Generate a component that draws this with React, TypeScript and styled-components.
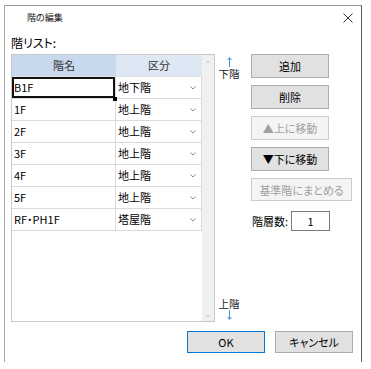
import React from "react";
import styled, { createGlobalStyle, css } from "styled-components";

const Global = createGlobalStyle`
  html, body { margin: 0; padding: 0; background: #fff; }
  body {
    font-family: "Noto Sans CJK JP", "Noto Sans", sans-serif;
    font-feature-settings: "palt";
    color: #000;
  }
`;

const Window = styled.div`
  margin: 5px 0 0 4px;
  width: 358px;
  height: 357px;
  box-sizing: border-box;
  border-top: 1px solid #9c9c9c;
  border-left: 1px solid #ababab;
  border-right: 1px solid #5c5c5c;
  background: #fff;
  display: flex;
  flex-direction: column;
`;

const TitleBar = styled.div`
  height: 24px;
  display: flex;
  align-items: center;
  justify-content: space-between;
  padding: 0 8px 0 22px;
`;

const Title = styled.span`
  font-size: 9px;
  line-height: 24px;
  color: #111;
`;

const Main = styled.div`
  display: flex;
  align-items: flex-start;
  padding-left: 6px;
`;

const LeftCol = styled.div`
  width: 204px;
  display: flex;
  flex-direction: column;
`;

const ListLabel = styled.div`
  height: 24px;
  box-sizing: border-box;
  padding-top: 6px;
  font-size: 12px;
  line-height: 14px;
`;

const Table = styled.div`
  width: 204px;
  height: 268px;
  box-sizing: border-box;
  border: 1px solid #c9c9c9;
  display: flex;
`;

const GridArea = styled.div`
  flex: 1;
  display: flex;
  flex-direction: column;
  background: #fff;
`;

const HeaderRow = styled.div`
  display: flex;
  height: 22px;
  box-sizing: border-box;
  border-bottom: 1px solid #e2e2e2;
`;

const HeaderCell = styled.div<{ $w: number; $bg: string }>`
  width: ${(p) => p.$w}px;
  background: ${(p) => p.$bg};
  text-align: center;
  font-size: 11px;
  line-height: 21px;
  color: #333;
`;

const Row = styled.div`
  display: flex;
  height: 22px;
  box-sizing: border-box;
  border-bottom: 1px solid #dadada;
`;

const NameCell = styled.div<{ $selected?: boolean }>`
  position: relative;
  width: 104px;
  box-sizing: border-box;
  border-right: 1px solid #dadada;
  padding-left: 2px;
  font-size: 11px;
  line-height: 21px;
  ${(p) =>
    p.$selected &&
    css`
      box-shadow: inset 0 0 0 2px #111;
    `}
`;

const Handle = styled.span`
  position: absolute;
  right: -2px;
  bottom: -3px;
  width: 4px;
  height: 4px;
  background: #000;
  z-index: 2;
`;

const KindCell = styled.div`
  width: 86px;
  box-sizing: border-box;
  border-right: 1px solid #dadada;
  padding: 0 5px 0 2px;
  display: flex;
  align-items: center;
  justify-content: space-between;
  font-size: 11px;
  line-height: 21px;
`;

const Scrollbar = styled.div`
  width: 12px;
  background: #f0f0f0;
  display: flex;
  flex-direction: column;
  align-items: center;
  justify-content: space-between;
  padding: 5px 0 3px;
  box-sizing: border-box;
`;

const ArrowCol = styled.div`
  width: 36px;
  height: 268px;
  margin-top: 24px;
  box-sizing: border-box;
  padding: 3px 0 2px 3px;
  display: flex;
  flex-direction: column;
  justify-content: space-between;
  align-items: flex-start;
`;

const ArrowGroup = styled.div`
  width: 22px;
  display: flex;
  flex-direction: column;
  align-items: center;
`;

const ArrowText = styled.span`
  font-size: 10.5px;
  line-height: 13px;
  color: #222;
`;

const ButtonCol = styled.div`
  margin-top: 24px;
  display: flex;
  flex-direction: column;
  gap: 7px;
`;

const Btn = styled.button<{ $w?: number; $h?: number; $primary?: boolean }>`
  width: ${(p) => p.$w ?? 78}px;
  height: ${(p) => p.$h ?? 24}px;
  box-sizing: border-box;
  padding: 0;
  margin: 0;
  border: 1px solid ${(p) => (p.$primary ? "#0078d7" : "#adadad")};
  background: #e1e1e1;
  font-family: inherit;
  font-feature-settings: "palt";
  font-size: 11px;
  line-height: 14px;
  color: #000;
  &:disabled {
    background: #f4f4f4;
    border-color: #cccccc;
    color: #a0a0a0;
  }
`;

const CountRow = styled.div`
  margin-top: 3px;
  display: flex;
  align-items: center;
`;

const CountLabel = styled.span`
  width: 40px;
  padding-left: 1px;
  box-sizing: border-box;
  font-size: 11px;
`;

const CountInput = styled.div`
  width: 39px;
  height: 20px;
  box-sizing: border-box;
  border: 1px solid #7a7a7a;
  font-size: 11px;
  line-height: 18px;
  text-align: center;
`;

const Footer = styled.div`
  margin-top: 9px;
  display: flex;
  justify-content: flex-end;
  gap: 10px;
  padding-right: 8px;
`;

const Chevron = ({ up, color = "#8a8a8a" }: { up?: boolean; color?: string }) => (
  <svg width="6" height="4" viewBox="0 0 6 4">
    <polyline
      points={up ? "0.5,3.5 3,1 5.5,3.5" : "0.5,0.5 3,3 5.5,0.5"}
      fill="none"
      stroke={color}
      strokeWidth="1"
    />
  </svg>
);

const Arrow = ({ down }: { down?: boolean }) => (
  <svg width="5" height="10" viewBox="0 0 5 10">
    {down ? (
      <>
        <line x1="2.5" y1="0" x2="2.5" y2="9" stroke="#4a8fd6" strokeWidth="1" />
        <polyline points="0.5,7 2.5,9.5 4.5,7" fill="none" stroke="#4a8fd6" strokeWidth="1" />
      </>
    ) : (
      <>
        <line x1="2.5" y1="1" x2="2.5" y2="10" stroke="#4a8fd6" strokeWidth="1" />
        <polyline points="0.5,3 2.5,0.5 4.5,3" fill="none" stroke="#4a8fd6" strokeWidth="1" />
      </>
    )}
  </svg>
);

const CloseIcon = () => (
  <svg width="10" height="10" viewBox="0 0 10 10">
    <path d="M0.5 0.5 L9.5 9.5 M9.5 0.5 L0.5 9.5" stroke="#333" strokeWidth="1" />
  </svg>
);

const rows = [
  { name: "B1F", kind: "地下階" },
  { name: "1F", kind: "地上階" },
  { name: "2F", kind: "地上階" },
  { name: "3F", kind: "地上階" },
  { name: "4F", kind: "地上階" },
  { name: "5F", kind: "地上階" },
  { name: "RF・PH1F", kind: "塔屋階" },
];

export default function App() {
  return (
    <>
      <Global />
      <Window>
        <TitleBar>
          <Title>階の編集</Title>
          <CloseIcon />
        </TitleBar>
        <Main>
          <LeftCol>
            <ListLabel>階リスト:</ListLabel>
            <Table>
              <GridArea>
                <HeaderRow>
                  <HeaderCell $w={104} $bg="#c9d9ed">階名</HeaderCell>
                  <HeaderCell $w={86} $bg="#dee8f4">区分</HeaderCell>
                </HeaderRow>
                {rows.map((r, i) => (
                  <Row key={r.name}>
                    <NameCell $selected={i === 0}>
                      {r.name}
                      {i === 0 && <Handle />}
                    </NameCell>
                    <KindCell>
                      <span>{r.kind}</span>
                      <Chevron />
                    </KindCell>
                  </Row>
                ))}
              </GridArea>
              <Scrollbar>
                <Chevron up color="#c2c2c2" />
                <Chevron color="#c2c2c2" />
              </Scrollbar>
            </Table>
          </LeftCol>
          <ArrowCol>
            <ArrowGroup>
              <Arrow />
              <ArrowText>下階</ArrowText>
            </ArrowGroup>
            <ArrowGroup>
              <ArrowText>上階</ArrowText>
              <Arrow down />
            </ArrowGroup>
          </ArrowCol>
          <ButtonCol>
            <Btn>追加</Btn>
            <Btn>削除</Btn>
            <Btn disabled>▲上に移動</Btn>
            <Btn>▼下に移動</Btn>
            <Btn $w={101} $h={23} disabled>
              基準階にまとめる
            </Btn>
            <CountRow>
              <CountLabel>階層数:</CountLabel>
              <CountInput>1</CountInput>
            </CountRow>
          </ButtonCol>
        </Main>
        <Footer>
          <Btn $h={22} $primary>
            OK
          </Btn>
          <Btn $h={22}>キャンセル</Btn>
        </Footer>
      </Window>
    </>
  );
}
